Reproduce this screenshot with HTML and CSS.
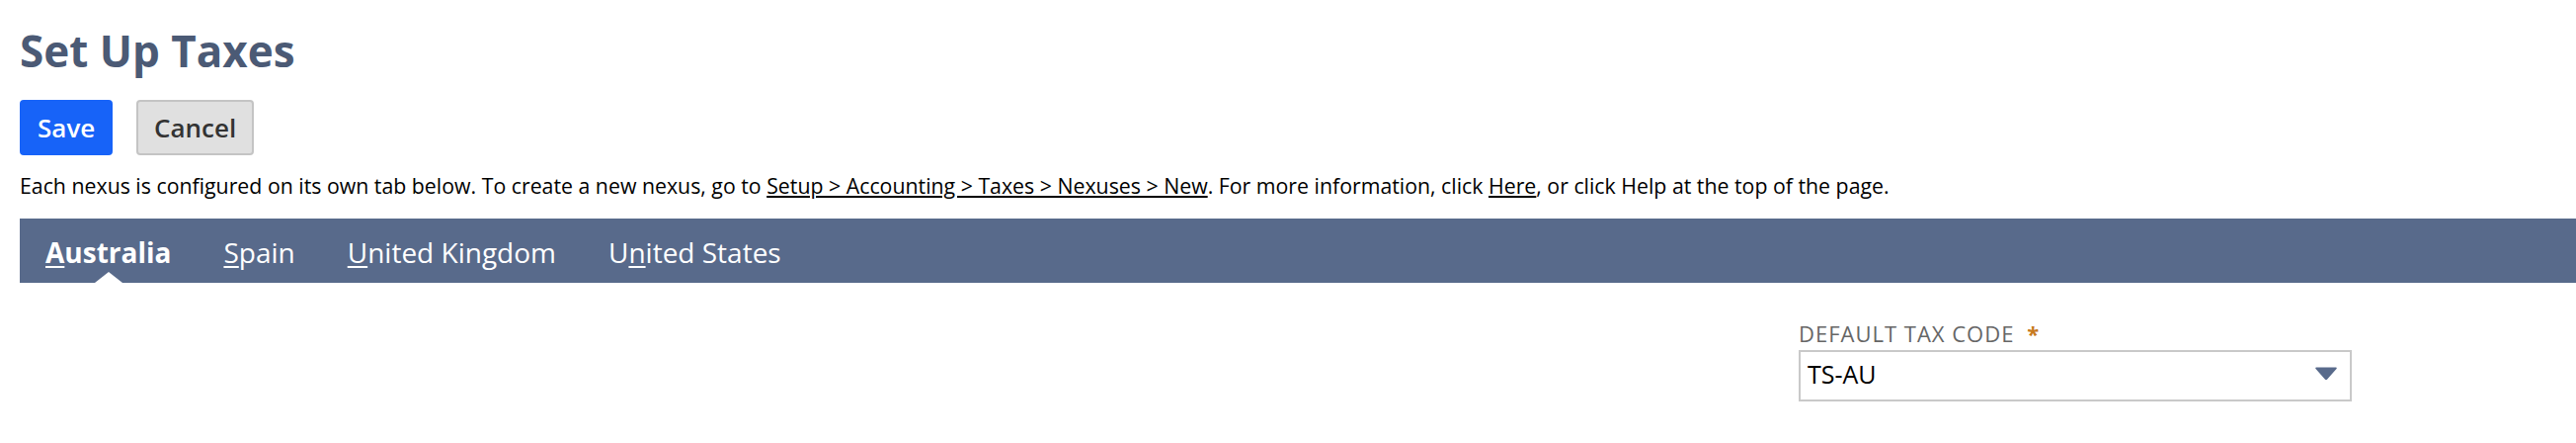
FILE: index.html
```html
<!DOCTYPE html>
<html lang="en">
<head>
<meta charset="utf-8">
<title>Set Up Taxes</title>
<link rel="stylesheet" href="styles.css">
</head>
<body>
<div class="page">
  <h1 class="title">Set Up Taxes</h1>
  <div class="actions">
    <button class="btn btn-primary" type="button">Save</button>
    <button class="btn btn-secondary" type="button">Cancel</button>
  </div>
  <p class="info">Each nexus is configured on its own tab below. To create a new nexus, go to <a href="#">Setup &gt; Accounting &gt; Taxes &gt; Nexuses &gt; New</a>. For more information, click <a href="#">Here</a>, or click Help at the top of the page.</p>
  <nav class="tabs">
    <a class="tab active" href="#"><u>A</u>ustralia</a>
    <a class="tab" href="#"><u>S</u>pain</a>
    <a class="tab" href="#"><u>U</u>nited Kingdom</a>
    <a class="tab" href="#">U<u>n</u>ited States</a>
  </nav>
  <div class="form">
    <div class="field">
      <label class="field-label">DEFAULT TAX CODE <span class="req">*</span></label>
      <div class="select">
        <span class="select-value">TS-AU</span>
        <svg class="select-arrow" width="24" height="15" viewBox="0 0 24 15"><path d="M2 1.5 H22 Q23.5 1.5 22.5 3 L13.2 13.6 Q12 15 10.8 13.6 L1.5 3 Q0.5 1.5 2 1.5 Z" fill="#586a8b"/></svg>
      </div>
    </div>
  </div>
</div>
</body>
</html>
```
FILE: styles.css
```css
html, body {
  margin: 0;
  padding: 0;
  background: #ffffff;
}
body {
  font-family: "Open Sans", "Liberation Sans", sans-serif;
  color: #000;
}
.page {
  padding-left: 20px;
  padding-top: 26px;
}
.title {
  margin: 0;
  font-size: 44px;
  line-height: 50px;
  font-weight: 700;
  color: #4b5a75;
}
.actions {
  display: flex;
  gap: 24px;
  margin-top: 25px;
}
.btn {
  box-sizing: border-box;
  height: 56px;
  padding: 0 16px;
  border-radius: 4px;
  font-family: "Open Sans", "Liberation Sans", sans-serif;
  font-size: 26px;
  font-weight: 600;
  line-height: 52px;
  cursor: pointer;
}
.btn-primary {
  width: 94px;
  background: #1763f8;
  border: 2px solid #1763f8;
  color: #fff;
}
.btn-secondary {
  width: 119px;
  background: #e0e0e0;
  border: 2px solid #c4c4c4;
  color: #333;
}
.info {
  margin: 17px 0 0;
  font-size: 21.3px;
  line-height: 28px;
}
.info a {
  color: #000;
  text-decoration: underline;
}
.tabs {
  display: flex;
  margin-top: 19px;
  height: 65px;
  background: #586a8b;
}
.tab {
  position: relative;
  display: block;
  padding: 4px 27px 0 26px;
  height: 61px;
  line-height: 61px;
  font-size: 28px;
  color: #fff;
  text-decoration: none;
}
.tab u {
  text-decoration-thickness: 2px;
  text-underline-offset: 3px;
}
.tab.active {
  font-weight: 700;
}
.tab.active::after {
  content: "";
  position: absolute;
  left: 50%;
  bottom: 0;
  margin-left: -14px;
  border-left: 14px solid transparent;
  border-right: 14px solid transparent;
  border-bottom: 11px solid #fff;
}
.form {
  display: grid;
  grid-template-columns: 1801px 560px;
  padding-top: 39px;
}
.field {
  grid-column: 2;
}
.field-label {
  display: block;
  font-size: 22px;
  line-height: 24px;
  color: #666;
  letter-spacing: 1px;
}
.req {
  color: #c77a1f;
  font-weight: 700;
  margin-left: 6px;
  letter-spacing: 0;
}
.select {
  box-sizing: border-box;
  margin-top: 5px;
  height: 52px;
  border: 2px solid #c9c9c9;
  display: flex;
  align-items: center;
  justify-content: space-between;
  padding: 0 12px 0 7px;
}
.select-value {
  font-size: 25px;
  line-height: 30px;
  margin-top: -4px;
  color: #000;
}
.select-arrow {
  display: block;
  margin-top: -6px;
}
```
